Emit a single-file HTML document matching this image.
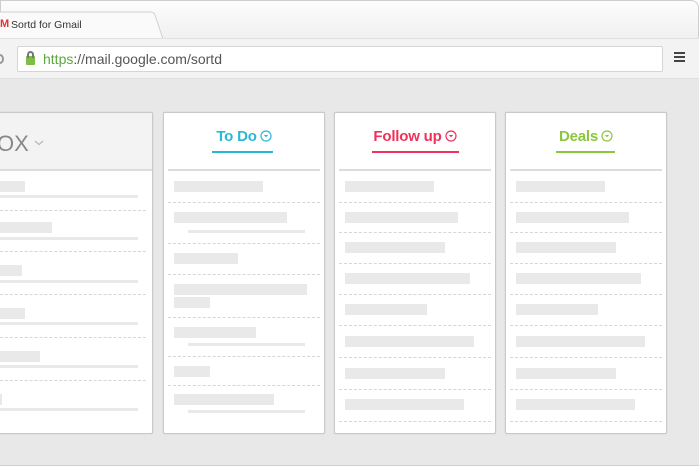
<!DOCTYPE html>
<html><head><meta charset="utf-8"><style>
*{margin:0;padding:0;box-sizing:border-box}
body{width:700px;height:467px;overflow:hidden;background:#fff;position:relative;font-family:"Liberation Sans",sans-serif}
.a{position:absolute}
.b{position:absolute;background:#e9e9e9;height:11px}
.l{position:absolute;background:#e9e9e9;height:3px}
.d{position:absolute;border-top:1px dashed #d6d6d6;height:0}
.col{position:absolute;top:112px;height:322px;background:#fff;border:1px solid #c9c9c9;box-shadow:0 0 1px #bbb;border-radius:2px}
.t{position:absolute;top:128px;font-size:15px;font-weight:bold;text-align:center;letter-spacing:-0.2px}
.t svg{vertical-align:-1px;margin-left:3px}
.hl{position:absolute;top:169px;height:2px;background:#dcdcdc}
</style></head><body>
<div class="a" style="left:0;top:0;width:699px;height:466px;border:1px solid #cfcfcf;border-radius:0 8px 0 0;background:linear-gradient(#fdfdfd,#f0f0f0 38px)"></div>
<!-- tab -->
<svg class="a" style="left:0;top:11px" width="170" height="29"><path d="M0 1 H150 Q154 1 155 4 L163 28 H0" fill="#fafafa" stroke="#d0d0d0"/></svg>
<div class="a" style="left:0;top:18px;font-size:11px;color:#d33;font-weight:bold">M</div>
<div class="a" style="left:11px;top:19px;font-size:10.5px;color:#333">Sortd for Gmail</div>
<!-- toolbar -->
<div class="a" style="left:0;top:38px;width:699px;height:40px;background:#f3f3f3;border-top:1px solid #e0e0e0"></div>
<div class="a" style="left:-4px;top:54px;width:8px;height:10px;border:2px solid #999;border-radius:50%"></div>
<div class="a" style="left:17px;top:46px;width:646px;height:26px;background:#fff;border:1px solid #d5d5d5;border-radius:2px"></div>
<div class="a" style="left:26px;top:56px;width:9px;height:9px;background:#7cbf44;border-radius:1px"></div>
<div class="a" style="left:27px;top:51px;width:7px;height:7px;border:2px solid #777;border-bottom:none;border-radius:4px 4px 0 0"></div>
<div class="a" style="left:43px;top:51px;font-size:14px;color:#555"><span style="color:#5aa83a">https</span>://mail.google.com/sortd</div>
<div class="a" style="left:674px;top:52px;width:11px;height:2px;background:#444;box-shadow:0 4px 0 #444,0 8px 0 #444"></div>
<!-- content -->
<div class="a" style="left:0;top:78px;width:699px;height:387px;background:#e8e8e8;border-top:1px solid #dedede"></div>
<!-- inbox -->
<div class="col" style="left:-5px;width:158px"></div>
<div class="a" style="left:0;top:113px;width:152px;height:57px;background:#f3f3f3"></div>
<div class="hl" style="left:0;width:152px;top:169px"></div>
<div class="a" style="left:-3px;top:131px;font-size:22px;color:#888">OX</div>
<svg class="a" style="left:34px;top:140px" width="10" height="6"><path d="M1 1 L5 4.5 L9 1" fill="none" stroke="#bbb" stroke-width="1.3"/></svg>
<div class="b" style="left:0;top:181px;width:25px"></div><div class="l" style="left:0;top:195px;width:138px"></div><div class="d" style="left:0;top:210px;width:146px"></div>
<div class="b" style="left:0;top:222px;width:52px"></div><div class="l" style="left:0;top:237px;width:138px"></div><div class="d" style="left:0;top:251px;width:146px"></div>
<div class="b" style="left:0;top:265px;width:22px"></div><div class="l" style="left:0;top:280px;width:138px"></div><div class="d" style="left:0;top:294px;width:146px"></div>
<div class="b" style="left:0;top:308px;width:25px"></div><div class="l" style="left:0;top:322px;width:138px"></div><div class="d" style="left:0;top:337px;width:146px"></div>
<div class="b" style="left:0;top:351px;width:40px"></div><div class="l" style="left:0;top:365px;width:138px"></div><div class="d" style="left:0;top:380px;width:146px"></div>
<div class="b" style="left:0;top:394px;width:2px"></div><div class="l" style="left:0;top:408px;width:138px"></div>
<!-- To Do -->
<div class="col" style="left:163px;width:162px"></div>
<div class="t" style="left:163px;width:162px;color:#29b8d6">To Do<svg width="12" height="12"><circle cx="6" cy="6" r="5" fill="none" stroke="#29b8d6" stroke-width="1.2"/><path d="M3.8 5 L6 7.3 L8.2 5" fill="#29b8d6"/></svg></div>
<div class="a" style="left:212px;top:151px;width:61px;height:2px;background:#29b8d6"></div>
<div class="hl" style="left:168px;width:152px"></div>
<div class="b" style="left:174px;top:181px;width:89px"></div><div class="d" style="left:168px;top:202px;width:152px"></div>
<div class="b" style="left:174px;top:212px;width:113px"></div><div class="l" style="left:188px;top:230px;width:117px"></div><div class="d" style="left:168px;top:243px;width:152px"></div>
<div class="b" style="left:174px;top:253px;width:64px"></div><div class="d" style="left:168px;top:274px;width:152px"></div>
<div class="b" style="left:174px;top:284px;width:133px"></div><div class="b" style="left:174px;top:297px;width:36px"></div><div class="d" style="left:168px;top:317px;width:152px"></div>
<div class="b" style="left:174px;top:327px;width:82px"></div><div class="l" style="left:188px;top:343px;width:117px"></div><div class="d" style="left:168px;top:356px;width:152px"></div>
<div class="b" style="left:174px;top:366px;width:36px"></div><div class="d" style="left:168px;top:385px;width:152px"></div>
<div class="b" style="left:174px;top:394px;width:100px"></div><div class="l" style="left:188px;top:410px;width:117px"></div>
<!-- Follow up -->
<div class="col" style="left:334px;width:162px"></div>
<div class="t" style="left:334px;width:162px;color:#f2305a">Follow up<svg width="12" height="12"><circle cx="6" cy="6" r="5" fill="none" stroke="#f2305a" stroke-width="1.2"/><path d="M3.8 5 L6 7.3 L8.2 5" fill="#f2305a"/></svg></div>
<div class="a" style="left:372px;top:151px;width:87px;height:2px;background:#f2305a"></div>
<div class="hl" style="left:339px;width:152px"></div>
<div class="b" style="left:345px;top:181px;width:89px"></div><div class="d" style="left:339px;top:202px;width:152px"></div>
<div class="b" style="left:345px;top:212px;width:113px"></div><div class="d" style="left:339px;top:232px;width:152px"></div>
<div class="b" style="left:345px;top:242px;width:100px"></div><div class="d" style="left:339px;top:263px;width:152px"></div>
<div class="b" style="left:345px;top:273px;width:125px"></div><div class="d" style="left:339px;top:294px;width:152px"></div>
<div class="b" style="left:345px;top:304px;width:82px"></div><div class="d" style="left:339px;top:325px;width:152px"></div>
<div class="b" style="left:345px;top:336px;width:129px"></div><div class="d" style="left:339px;top:357px;width:152px"></div>
<div class="b" style="left:345px;top:368px;width:100px"></div><div class="d" style="left:339px;top:389px;width:152px"></div>
<div class="b" style="left:345px;top:399px;width:119px"></div><div class="d" style="left:339px;top:421px;width:152px"></div>
<!-- Deals -->
<div class="col" style="left:505px;width:162px"></div>
<div class="t" style="left:505px;width:162px;color:#8cc63e">Deals<svg width="12" height="12"><circle cx="6" cy="6" r="5" fill="none" stroke="#8cc63e" stroke-width="1.2"/><path d="M3.8 5 L6 7.3 L8.2 5" fill="#8cc63e"/></svg></div>
<div class="a" style="left:556px;top:151px;width:59px;height:2px;background:#8cc63e"></div>
<div class="hl" style="left:510px;width:152px"></div>
<div class="b" style="left:516px;top:181px;width:89px"></div><div class="d" style="left:510px;top:202px;width:152px"></div>
<div class="b" style="left:516px;top:212px;width:113px"></div><div class="d" style="left:510px;top:232px;width:152px"></div>
<div class="b" style="left:516px;top:242px;width:100px"></div><div class="d" style="left:510px;top:263px;width:152px"></div>
<div class="b" style="left:516px;top:273px;width:125px"></div><div class="d" style="left:510px;top:294px;width:152px"></div>
<div class="b" style="left:516px;top:304px;width:82px"></div><div class="d" style="left:510px;top:325px;width:152px"></div>
<div class="b" style="left:516px;top:336px;width:129px"></div><div class="d" style="left:510px;top:357px;width:152px"></div>
<div class="b" style="left:516px;top:368px;width:100px"></div><div class="d" style="left:510px;top:389px;width:152px"></div>
<div class="b" style="left:516px;top:399px;width:119px"></div><div class="d" style="left:510px;top:421px;width:152px"></div>
</body></html>
